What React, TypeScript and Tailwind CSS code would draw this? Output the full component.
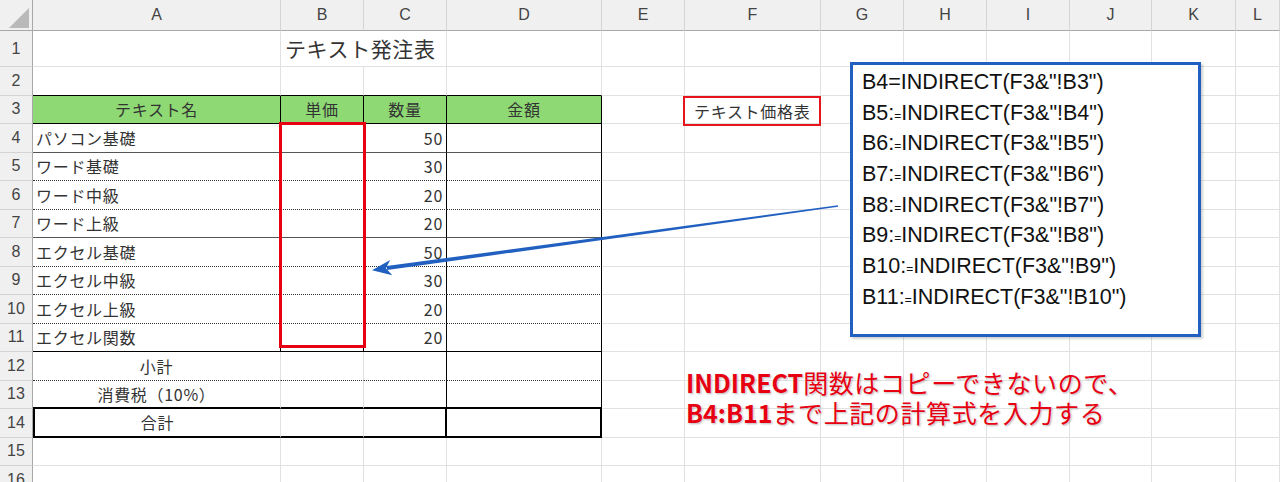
import React from 'react';

const COLS = ['A', 'B', 'C', 'D', 'E', 'F', 'G', 'H', 'I', 'J', 'K', 'L'];

const rightCls: Record<string, string> = {
  grid: 'border-r border-r-[#e1e1e1]',
  black: 'border-r border-r-black',
  thick: 'border-r-2 border-r-black',
};
const bottomCls: Record<string, string> = {
  grid: 'border-b border-b-[#e1e1e1]',
  black: 'border-b border-b-black',
  gray: 'border-b border-b-[#555555]',
  dot: 'border-b border-b-[#333333] [border-bottom-style:dotted]',
  thick: 'border-b-2 border-b-black',
};

const names = ['パソコン基礎', 'ワード基礎', 'ワード中級', 'ワード上級', 'エクセル基礎', 'エクセル中級', 'エクセル上級', 'エクセル関数'];
const qty = [50, 30, 20, 20, 50, 30, 20, 20];
const bottoms4to11 = ['gray', 'dot', 'dot', 'gray', 'dot', 'dot', 'dot', 'black'];

type Conf = { r: string; b: string; extra: string; content?: React.ReactNode; align: string };

function conf(row: number, c: number): Conf {
  let r = 'grid';
  let b = 'grid';
  let extra = '';
  let content: React.ReactNode = null;
  let align = 'justify-start pl-[3px]';
  if (row === 2 && c <= 3) b = 'black';
  if (row === 3 && c <= 3) {
    r = 'black';
    b = 'black';
    extra = 'bg-[#8ed973]';
    align = 'justify-center';
    content = ['テキスト名', '単価', '数量', '金額'][c];
  }
  if (row >= 4 && row <= 11 && c <= 3) {
    r = 'black';
    b = bottoms4to11[row - 4];
    if (c === 0) content = names[row - 4];
    if (c === 2) {
      content = qty[row - 4];
      align = 'justify-end pr-[3px]';
    }
  }
  if ((row === 12 || row === 13) && c <= 3) {
    r = c >= 2 ? 'black' : 'grid';
    b = row === 12 ? 'dot' : 'thick';
    if (c === 0) {
      content = row === 12 ? '小計' : '消費税（10%）';
      align = 'justify-center';
    }
  }
  if (row === 14 && c <= 3) {
    r = c >= 2 ? 'thick' : 'grid';
    b = 'thick';
    if (c === 0) {
      content = '合計';
      align = 'justify-center';
      extra = 'border-l-2 border-l-black';
    }
  }
  return { r, b, extra, content, align };
}

const formulas: [string, string][] = [
  ['B5:', 'INDIRECT(F3&"!B4")'],
  ['B6:', 'INDIRECT(F3&"!B5")'],
  ['B7:', 'INDIRECT(F3&"!B6")'],
  ['B8:', 'INDIRECT(F3&"!B7")'],
  ['B9:', 'INDIRECT(F3&"!B8")'],
  ['B10:', 'INDIRECT(F3&"!B9")'],
  ['B11:', 'INDIRECT(F3&"!B10")'],
];

export default function App() {
  const rows = Array.from({ length: 16 }, (_, i) => i + 1);
  return (
    <div className="w-[1280px] h-[482px] overflow-hidden bg-white font-['Noto_Sans_CJK_JP','Liberation_Sans',sans-serif] text-[#333333]">
      <div className="relative grid grid-cols-[33px_248px_83px_83px_155px_83px_136px_83px_83px_83px_82px_84px_1fr] grid-rows-[31px_36px_repeat(15,28.5px)]">
        {/* corner */}
        <div className="bg-[#f0f0f0] border-r border-r-[#a8a8a8] border-b border-b-[#a8a8a8] flex items-end justify-end pr-[3px] pb-[2px]">
          <div className="w-0 h-0 border-l-[20px] border-l-transparent border-b-[20px] border-b-[#b9b9b9]" />
        </div>
        {COLS.map((c) => (
          <div
            key={c}
            className="bg-[#f0f0f0] border-r border-r-[#d4d4d4] border-b border-b-[#a8a8a8] flex items-center justify-center text-[16px] text-[#444444] font-['Liberation_Sans',sans-serif]"
          >
            {c}
          </div>
        ))}
        {rows.map((row) => (
          <React.Fragment key={row}>
            <div className="bg-[#f0f0f0] border-r border-r-[#a8a8a8] border-b border-b-[#d4d4d4] flex items-center justify-center text-[16px] text-[#444444] font-['Liberation_Sans',sans-serif]">
              {row}
            </div>
            {COLS.map((col, c) => {
              if (row === 1 && c === 2) return null;
              if (row === 1 && c === 1) {
                return (
                  <div
                    key={col}
                    className="col-span-2 border-r border-r-[#e1e1e1] border-b border-b-[#e1e1e1] flex items-center pl-[4px] whitespace-nowrap text-[21px] tracking-[0.6px] text-[#333333]"
                  >
                    テキスト発注表
                  </div>
                );
              }
              const k = conf(row, c);
              return (
                <div
                  key={col}
                  className={`${rightCls[k.r]} ${bottomCls[k.b]} ${k.extra} ${k.align} flex items-center whitespace-nowrap text-[16px] tracking-[0.7px]`}
                >
                  {k.content}
                </div>
              );
            })}
          </React.Fragment>
        ))}

        {/* red border over B4:B11 */}
        <div className="absolute left-[279px] top-[122px] w-[87px] h-[226px] border-[3px] border-[#e60012]" />

        {/* F3 label */}
        <div className="absolute left-[683px] top-[96px] w-[138px] h-[30px] border-2 border-[#e8141b] flex items-center pl-[9px] text-[16px] tracking-[0.7px] whitespace-nowrap text-[#333333]">
          テキスト価格表
        </div>

        {/* arrow */}
        <svg className="absolute left-0 top-0 w-[1280px] h-[482px] pointer-events-none" viewBox="0 0 1280 482">
          <polygon points="838.1,206.8 837.9,205.2 386.6,266.1 387.2,270.1" fill="#2160c0" />
          <polygon points="372,270.2 392.3,275.2 385.9,268.2 390.2,260" fill="#2160c0" />
        </svg>

        {/* formula box */}
        <div className="absolute left-[850px] top-[62px] w-[351px] h-[275px] border-[3px] border-[#2160c0] bg-white shadow-[2px_2px_2px_rgba(0,0,0,0.18)] pl-[9px] pt-[2px] font-['Liberation_Sans',sans-serif] text-[21.5px] leading-[30.7px] text-[#111111] whitespace-nowrap">
          <div className="h-[30.7px]">{'B4=INDIRECT(F3&"!B3")'}</div>
          {formulas.map(([pre, post], i) => (
            <div key={i} className="h-[30.7px]">
              {pre}
              <span className="text-[12px] leading-none">=</span>
              {post}
            </div>
          ))}
        </div>

        {/* red annotation */}
        <div className="absolute left-[686px] top-[367px] text-[25px] leading-[30px] text-[#e60012] whitespace-nowrap tracking-[0.6px] [text-shadow:0_0_2px_#ffffff,1px_1px_2px_rgba(0,0,0,0.35)]">
          <div className="h-[30px]">
            <span className="font-bold tracking-normal">INDIRECT</span>関数はコピーできないので、
          </div>
          <div className="h-[30px]">
            <span className="font-bold tracking-normal">B4:B11</span>まで上記の計算式を入力する
          </div>
        </div>
      </div>
    </div>
  );
}
